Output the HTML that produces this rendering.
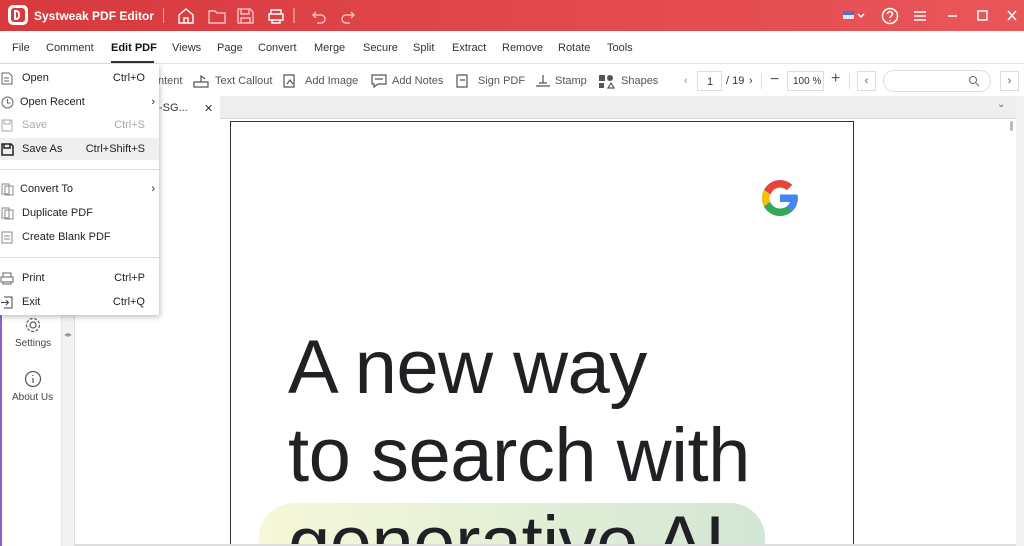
<!DOCTYPE html>
<html><head><style>
*{box-sizing:border-box;margin:0;padding:0}
body{width:1024px;height:546px;overflow:hidden;font-family:"Liberation Sans",sans-serif;background:#fff;position:relative;color:#333}
.a{position:absolute;white-space:nowrap}
.title{left:0;top:0;width:1024px;height:31px;background:linear-gradient(90deg,#d7393d,#e9565a)}
.menu{top:31px;left:0;width:1024px;height:33px;background:#fff;border-bottom:1px solid #e8dff0;font-size:11px;color:#333}
.menu span{position:absolute;top:11px}
.tb{top:65px;left:0;width:1024px;height:31px;background:#fff;font-size:11px;color:#555}
.tb span{position:absolute;top:10px}
.ic{stroke:#555;fill:none;stroke-width:1.2}
.dd{left:0;top:64px;width:159px;height:251px;background:#fff;box-shadow:1px 2px 5px rgba(0,0,0,.25);font-size:11px;color:#222}
.dd div{position:absolute;left:0;width:159px;height:22px}
.dd .l{position:absolute;left:22px;top:5px}
.dd .r{position:absolute;right:14px;top:5px}
</style></head><body>
<div class="a title">
 <div class="a" style="left:8px;top:5px;width:20px;height:20px;border-radius:5px;background:#fff"><div class="a" style="left:3px;top:3px;width:14px;height:14px;border-radius:3px;background:#d7393d"></div><div class="a" style="left:6px;top:5px;width:6px;height:10px;border:2px solid #fff;border-radius:0 4px 4px 0"></div></div>
 <div class="a" style="left:34px;top:9px;color:#fff;font-weight:bold;font-size:12px">Systweak PDF Editor</div>
 <div class="a" style="left:163px;top:8px;width:1px;height:15px;background:#f2a0a2"></div>
 <svg class="a" style="left:176px;top:6px" width="200" height="20" fill="none" stroke="#fff" stroke-width="1.4">
  <path d="M3 9l7-6 7 6v8H3z M8 17v-5h4v5"/>
  <path d="M33 5h6l2 2h8v10H33z" stroke="#f7c0c1"/>
  <path d="M62 3h12l3 3v11H62z M65 3v5h8V3 M65 17v-5h9v5" stroke="#f7c0c1"/>
  <path d="M93 8h14v6H93z M95 8V4h10v4 M96 14v3h8v-3"/>
  <path d="M118 2v15" stroke="#f2a0a2"/>
  <path d="M140 6l-3 3 3 3 M137 9h8a4 4 0 010 8h-4" stroke="#f7c0c1"/>
  <path d="M175 6l3 3-3 3 M178 9h-8a4 4 0 000 8h4" stroke="#f7c0c1"/>
 </svg>
 <div class="a" style="left:843px;top:11px;width:11px;height:8px;background:linear-gradient(#5a6fc2 50%,#e2e2f0 50%)"></div>
 <svg class="a" style="left:856px;top:6px" width="168" height="20" fill="none" stroke="#fff" stroke-width="1.5">
  <path d="M2 8l3 3 3-3"/>
  <circle cx="34" cy="10" r="7.5"/><path d="M31.5 8a2.5 2.5 0 115 0c0 2-2.5 2-2.5 4 M34 14v1"/>
  <path d="M58 6h12 M58 10h12 M58 14h12"/>
  <path d="M92 10h9"/>
  <path d="M122 5h9v9h-9z"/>
  <path d="M152 5l8 9 M160 5l-8 9"/>
 </svg>
</div>
<div class="a menu">
 <span style="left:12px">File</span><span style="left:46px">Comment</span><span style="left:111px;font-weight:bold;color:#111">Edit PDF</span>
 <div class="a" style="left:111px;top:30px;width:43px;height:2px;background:#333"></div>
 <span style="left:172px">Views</span><span style="left:217px">Page</span><span style="left:258px">Convert</span><span style="left:314px">Merge</span><span style="left:363px">Secure</span><span style="left:413px">Split</span><span style="left:452px">Extract</span><span style="left:502px">Remove</span><span style="left:558px">Rotate</span><span style="left:607px">Tools</span>
</div>
<div class="a tb">
 <span style="left:158px">ntent</span>
 <svg class="a" style="left:192px;top:7px" width="470" height="18"><g class="ic"><path d="M2 10h14v5H2z M9 10V4l4 3"/><path d="M92 3h10v12H92z M95 12l3-4 3 4"/><path d="M180 3h14v9h-8l-4 3v-3h-2z M183 7h8"/><path d="M265 3h10v12h-10z M268 8h5"/><path d="M344 14h14 M347 11h8 M351 3v8"/></g><g fill="#555"><rect x="407" y="3" width="6" height="6"/><circle cx="418" cy="6" r="3"/><rect x="407" y="11" width="5" height="5"/></g><path class="ic" d="M416 16l3-5 3 5z"/></svg>
 <span style="left:215px">Text Callout</span><span style="left:305px">Add Image</span><span style="left:392px">Add Notes</span><span style="left:478px">Sign PDF</span><span style="left:555px">Stamp</span><span style="left:621px">Shapes</span>
 <span style="left:684px;color:#999">‹</span>
 <div class="a" style="left:697px;top:6px;width:25px;height:20px;border:1px solid #ddd;font-size:11px;padding:4px 0 0 9px;color:#333">1</div>
 <span style="left:726px;color:#333">/ 19</span><span style="left:749px;color:#333">›</span>
 <div class="a" style="left:761px;top:8px;width:1px;height:16px;background:#ddd"></div>
 <span style="left:770px;top:6px;font-size:16px">−</span>
 <div class="a" style="left:787px;top:6px;width:37px;height:20px;border:1px solid #ddd;font-size:10px;padding:4px 0 0 5px;color:#333">100 %</div>
 <span style="left:831px;top:5px;font-size:16px">+</span>
 <div class="a" style="left:849px;top:8px;width:1px;height:16px;background:#ddd"></div>
 <div class="a" style="left:857px;top:6px;width:19px;height:20px;border:1px solid #ddd;text-align:center;padding-top:3px">‹</div>
 <div class="a" style="left:883px;top:5px;width:108px;height:22px;border:1px solid #ddd;border-radius:11px"></div>
 <svg class="a" style="left:968px;top:10px" width="12" height="12"><circle cx="5" cy="5" r="3.5" stroke="#666" fill="none"/><path d="M8 8l3 3" stroke="#666"/></svg>
 <div class="a" style="left:1000px;top:6px;width:19px;height:20px;border:1px solid #ddd;text-align:center;padding-top:3px">›</div>
</div>
<div class="a" style="left:0;top:96px;width:1016px;height:23px;background:#eeeeee;border-bottom:1px solid #d8d8d8"></div>
<div class="a" style="left:75px;top:96px;width:145px;height:23px;background:#fff;font-size:11px;padding:6px 0 0 84px;color:#333">-SG...</div>
<div class="a" style="left:204px;top:102px;font-size:11px;color:#333">✕</div>
<div class="a" style="left:997px;top:99px;font-size:10px;color:#666">⌄</div>
<div class="a" style="left:1016px;top:96px;width:8px;height:450px;background:#f3f3f3"></div>
<div class="a" style="left:1010px;top:121px;width:3px;height:10px;background:#bbb;border-radius:2px"></div>
<div class="a" style="left:0;top:119px;width:62px;height:427px;background:#fff;border-right:1px solid #e5e5e5"></div>
<div class="a" style="left:0;top:310px;width:2px;height:236px;background:#8a63c9"></div>
<div class="a" style="left:62px;top:119px;width:13px;height:427px;background:#f2f2f2;border-right:1px solid #ddd"></div>
<div class="a" style="left:64px;top:330px;font-size:8px;color:#999">◂▸</div>
<svg class="a" style="left:24px;top:316px" width="18" height="18" fill="none" stroke="#555" stroke-width="1.2"><circle cx="9" cy="9" r="3"/><circle cx="9" cy="9" r="6.5" stroke-dasharray="3 1.5"/></svg>
<div class="a" style="left:15px;top:338px;font-size:10px;color:#444">Settings</div>
<svg class="a" style="left:24px;top:370px" width="18" height="18" fill="none" stroke="#555" stroke-width="1.2"><circle cx="9" cy="9" r="7.5"/><path d="M9 8v5 M9 5v1"/></svg>
<div class="a" style="left:12px;top:392px;font-size:10px;color:#444">About Us</div>
<div class="a" style="left:230px;top:121px;width:624px;height:423px;border:1px solid #333;border-bottom:none;background:#fff;overflow:hidden">
 <svg class="a" style="left:528px;top:55px" width="42" height="42" viewBox="0 0 48 48"><path d="M43.6 20H24v8.5h11.3C34.1 33 29.7 36 24 36c-6.6 0-12-5.4-12-12s5.4-12 12-12c3 0 5.8 1.1 7.9 3l6-6C34.3 5.6 29.4 3.5 24 3.5 12.7 3.5 3.5 12.7 3.5 24S12.7 44.5 24 44.5 44.5 36 44.5 24c0-1.4-.3-2.7-.9-4z" fill="#4285f4"/><path d="M6.3 14.7l7 5.1C15.1 15.3 19.2 12 24 12c3 0 5.8 1.1 7.9 3l6-6C34.3 5.6 29.4 3.5 24 3.5c-7.9 0-14.7 4.5-17.7 11.2z" fill="#ea4335"/><path d="M24 44.5c5.3 0 10.1-2 13.7-5.3l-6.3-5.4C29.3 35.3 26.8 36 24 36c-5.7 0-10.1-3-11.3-7.5l-7 5.4C9 40 16 44.5 24 44.5z" fill="#34a853"/><path d="M12.7 28.5c-.5-1.4-.7-2.9-.7-4.5s.2-3.1.7-4.5l-7-5.1C4.3 17.3 3.5 20.6 3.5 24s.8 6.7 2.2 9.8z" fill="#fbbc05"/></svg>
 <div class="a" style="left:28px;top:381px;width:506px;height:70px;border-radius:36px;background:linear-gradient(90deg,#f6f8d8,#d2e6d4)"></div>
 <div class="a" style="left:57px;top:202px;font-size:76px;line-height:88px;color:#202124;letter-spacing:-0.5px">A new way<br>to search with<br>generative AI</div>
</div>
<div class="a" style="left:75px;top:544px;width:941px;height:2px;background:#ddd"></div>
<div class="a dd">
 <div style="top:3px"><svg class="a" style="left:1px;top:5px" width="12" height="13" fill="none" stroke="#666"><path d="M1 1h7l3 3v8H1z M3 6h5 M3 9h5"/></svg><span class="l">Open</span><span class="r">Ctrl+O</span></div>
 <div style="top:27px"><svg class="a" style="left:1px;top:5px" width="13" height="13" fill="none" stroke="#666"><circle cx="6.5" cy="6.5" r="5.5"/><path d="M6.5 3v4h3"/></svg><span class="l" style="left:20px">Open Recent</span><span class="r" style="right:4px">›</span></div>
 <div style="top:50px;color:#aaa"><svg class="a" style="left:1px;top:5px" width="12" height="13" fill="none" stroke="#aaa"><path d="M1 1h9l1 1v10H1z M3 1v4h6V1"/></svg><span class="l">Save</span><span class="r">Ctrl+S</span></div>
 <div style="top:74px;background:#efefef"><svg class="a" style="left:1px;top:5px" width="13" height="13" fill="none" stroke="#222" stroke-width="1.5"><path d="M1 1h9l2 2v9H1z M3 1v4h6V1"/></svg><span class="l">Save As</span><span class="r">Ctrl+Shift+S</span></div>
 <div style="top:105px;height:1px;background:#e0e0e0"></div>
 <div style="top:114px"><svg class="a" style="left:1px;top:5px" width="13" height="13" fill="none" stroke="#888"><path d="M1 1h7v10H1z M4 3h8v9H4z"/></svg><span class="l" style="left:20px">Convert To</span><span class="r" style="right:4px">›</span></div>
 <div style="top:138px"><svg class="a" style="left:1px;top:5px" width="13" height="13" fill="none" stroke="#888"><path d="M1 1h7v10H1z M4 3h8v9H4z"/></svg><span class="l">Duplicate PDF</span></div>
 <div style="top:162px"><svg class="a" style="left:1px;top:5px" width="12" height="13" fill="none" stroke="#888"><path d="M1 1h10v11H1z M3 5h6 M3 8h6"/></svg><span class="l">Create Blank PDF</span></div>
 <div style="top:193px;height:1px;background:#e0e0e0"></div>
 <div style="top:203px"><svg class="a" style="left:0;top:5px" width="14" height="13" fill="none" stroke="#666"><path d="M1 5h12v5H1z M3 5V1h8v4 M3 10v2h8v-2"/></svg><span class="l">Print</span><span class="r">Ctrl+P</span></div>
 <div style="top:227px"><svg class="a" style="left:0;top:5px" width="13" height="13" fill="none" stroke="#444"><path d="M4 1h8v11H4 M1 6.5h7 M6 4l2.5 2.5L6 9"/></svg><span class="l">Exit</span><span class="r">Ctrl+Q</span></div>
</div>
</body></html>
